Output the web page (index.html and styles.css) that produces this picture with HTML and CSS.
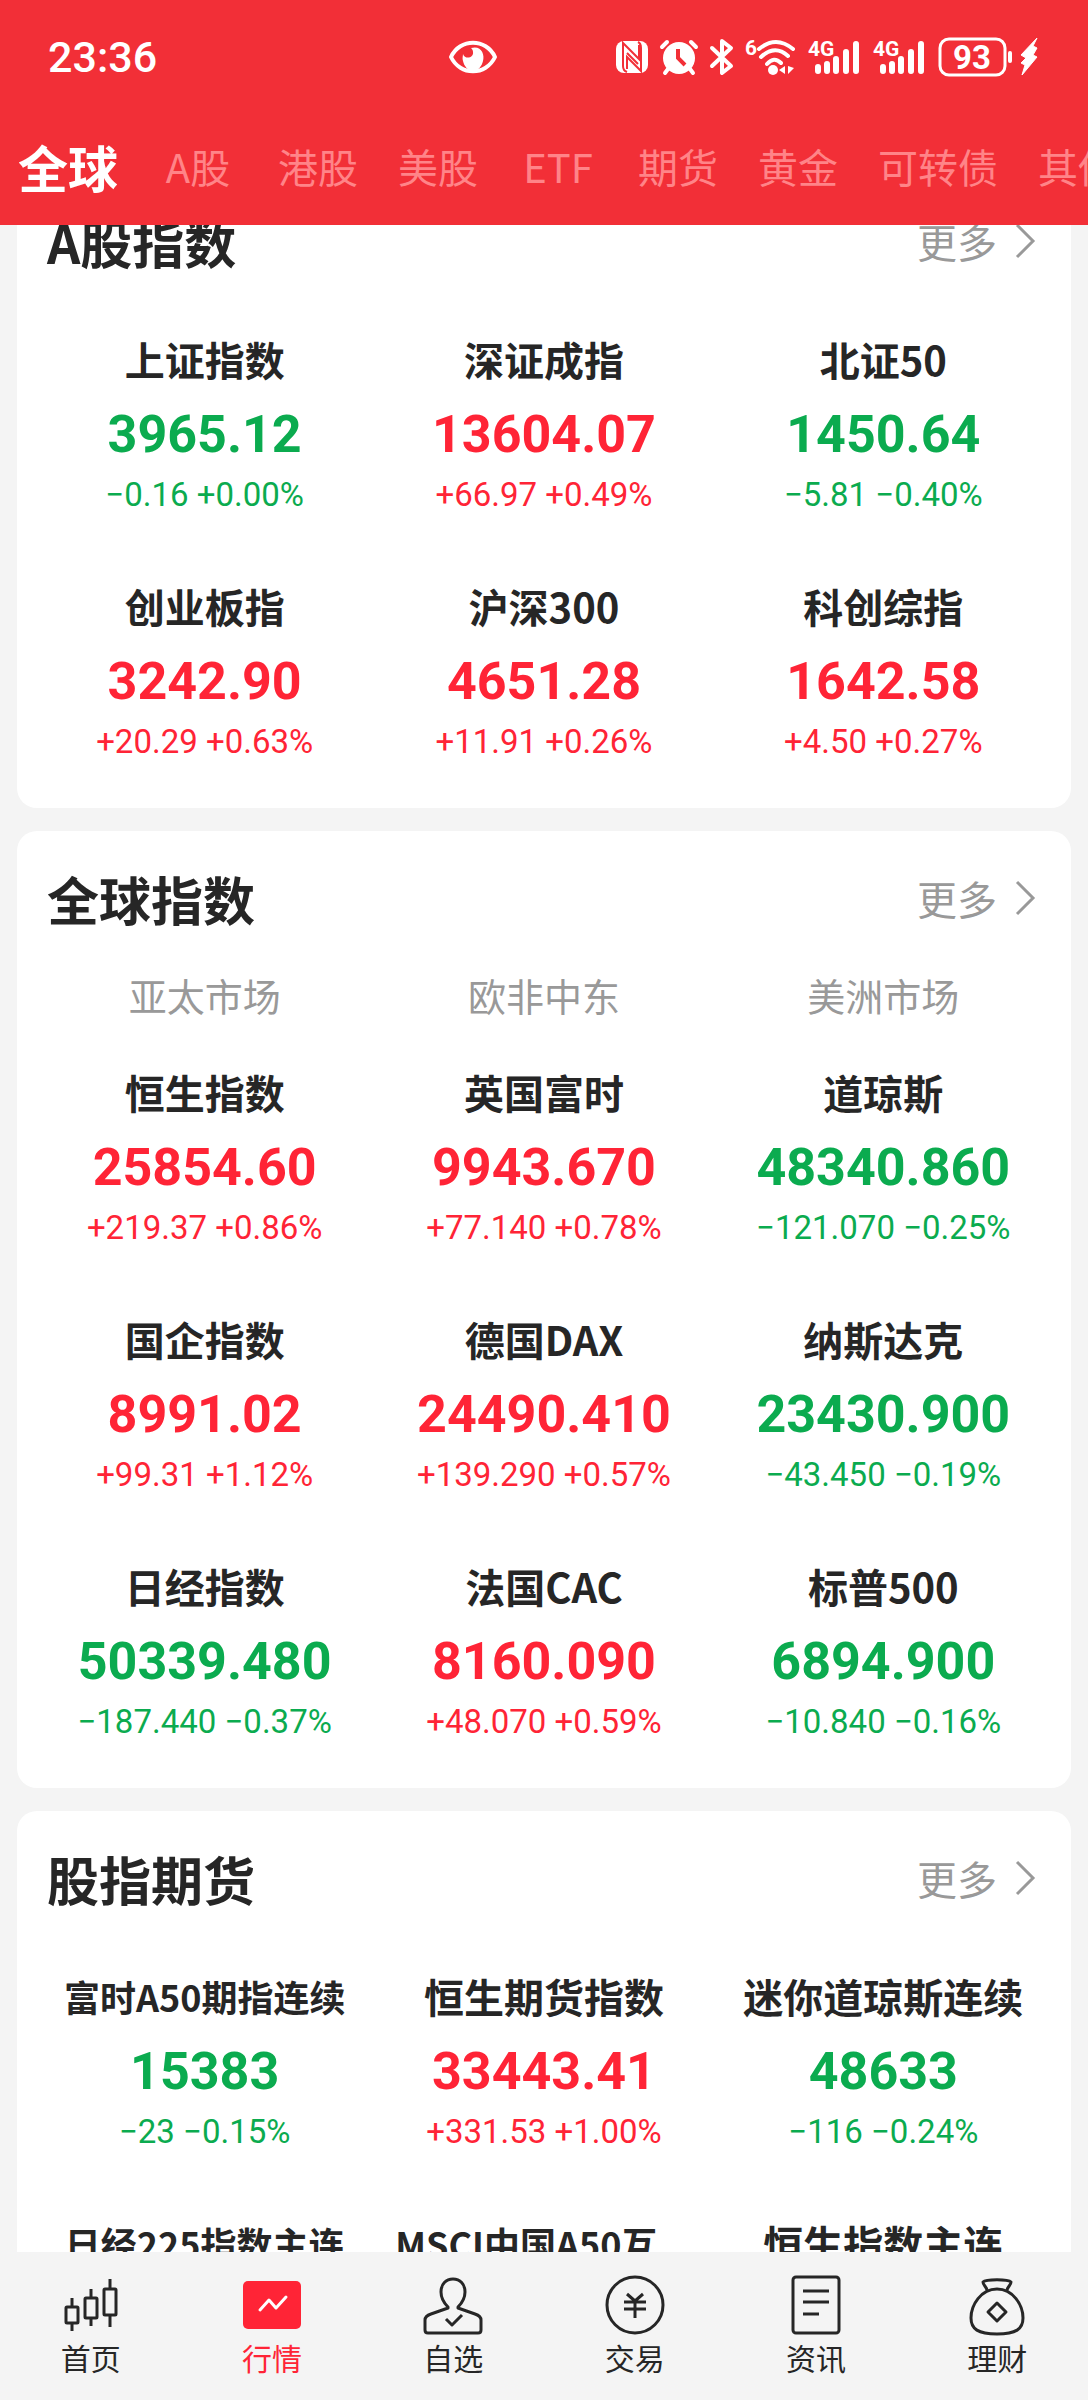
FILE: index.html
```html
<!DOCTYPE html>
<html lang="zh-CN">
<head>
<meta charset="UTF-8">
<meta name="viewport" content="width=device-width, initial-scale=1.0">
<title>行情 - 全球</title>
<link rel="stylesheet" href="styles.css">
</head>
<body>

<header class="top">
  <div class="status-bar">
    <span class="time">23:36</span>
    <svg class="eye" width="50" height="34" viewBox="0 0 50 34" fill="none">
      <path d="M3 17C12 -2 38 -2 47 17C38 36 12 36 3 17Z" stroke="#fff" stroke-width="4" stroke-linejoin="round"/>
      <path d="M23 8C33 5 37 14 35 21C34 26 30 31 25 31C20 31 16 26 15 21C14 18 15 16 15 14C17 20 26 18 25 12C25 10 24 9 23 8Z" fill="#fff"/>
    </svg>
    <div class="status-icons">
      <!-- NFC -->
      <svg width="32" height="34" viewBox="0 0 32 34">
        <rect y="1" width="32" height="32" rx="8" fill="#fff"/>
        <path d="M11 32C8 31 7 29 7 26V3L23 19V5M22 2C24 3 25 5 25 8V31L11 17V29M11 13L22 24" fill="none" stroke="#f22f37" stroke-width="2"/>
      </svg>
      <!-- Alarm -->
      <svg class="alarm" width="38" height="36" viewBox="0 0 38 36">
        <circle cx="19" cy="19" r="16" fill="#fff"/>
        <path d="M2 8L7 3M36 8L31 3M8 30L5 34M30 30L33 34" stroke="#fff" stroke-width="4" stroke-linecap="round"/>
        <path d="M18 10V19L25 26" fill="none" stroke="#f22f37" stroke-width="4"/>
      </svg>
      <!-- Bluetooth -->
      <svg class="bluetooth" width="24" height="36" viewBox="0 0 24 36" fill="none" stroke="#fff" stroke-width="4" stroke-linejoin="round" stroke-linecap="round">
        <path d="M2 9L21 27L12 34V2L21 9L2 27"/>
      </svg>
      <!-- Wi-Fi 6 -->
      <svg class="wifi" width="50" height="36" viewBox="0 0 50 36">
        <text x="-1" y="16" class="svg-tag">6</text>
        <g fill="none" stroke="#fff" stroke-width="4" stroke-linecap="round">
          <path d="M13 10Q30 -4 47 10M15 18Q29 5 42 17M21 25Q28 17 35 24"/>
        </g>
        <circle cx="27" cy="31" r="5" fill="#fff"/>
        <path d="M33 31L39 27V35ZM41 27V35ZM42 27L48 29L42 35Z" fill="#fff"/>
      </svg>
      <!-- Mobile signal, two cards -->
      <svg class="signal" width="53" height="36" viewBox="0 0 53 36">
        <text x="0" y="17" class="svg-tag">4G</text>
        <path d="M10 28V32M19 25V32M28 20V32M38 13V32M48 5V32" stroke="#fff" stroke-width="6" stroke-linecap="round"/>
      </svg>
      <svg class="signal" width="53" height="36" viewBox="0 0 53 36">
        <text x="0" y="17" class="svg-tag">4G</text>
        <path d="M10 28V32M19 25V32M28 20V32M38 13V32M48 5V32" stroke="#fff" stroke-width="6" stroke-linecap="round"/>
      </svg>
      <!-- Battery -->
      <svg width="102" height="40" viewBox="0 0 102 40">
        <rect x="2" y="2" width="65" height="36" rx="9" fill="none" stroke="#fff" stroke-width="3"/>
        <text x="34" y="32" class="svg-battery">93</text>
        <path d="M72 16V24" stroke="#fff" stroke-width="4" stroke-linecap="round"/>
        <path d="M99 1L83 18L88 21L83 26L87 28L84 38L99 20L95 18L99 11L95 9Z" fill="#fff" stroke="#fff" stroke-width="1" stroke-linejoin="round"/>
      </svg>
    </div>
  </div>
  <nav class="tabs">
    <a href="#" class="tab active">全球</a>
    <a href="#" class="tab">A股</a>
    <a href="#" class="tab">港股</a>
    <a href="#" class="tab">美股</a>
    <a href="#" class="tab">ETF</a>
    <a href="#" class="tab">期货</a>
    <a href="#" class="tab">黄金</a>
    <a href="#" class="tab">可转债</a>
    <a href="#" class="tab">其他</a>
  </nav>
</header>

<main class="content">
  <section class="card scrolled">
    <div class="card-head">
      <h2>A股指数</h2>
      <a href="#" class="more">更多
        <svg width="20" height="36" viewBox="0 0 20 36"><path d="M2 2L18 18L2 34"/></svg>
      </a>
    </div>
    <div class="grid">
      <div class="quote down"><h3>上证指数</h3><strong>3965.12</strong><span>−0.16 +0.00%</span></div>
      <div class="quote up"><h3>深证成指</h3><strong>13604.07</strong><span>+66.97 +0.49%</span></div>
      <div class="quote down"><h3>北证50</h3><strong>1450.64</strong><span>−5.81 −0.40%</span></div>
      <div class="quote up"><h3>创业板指</h3><strong>3242.90</strong><span>+20.29 +0.63%</span></div>
      <div class="quote up"><h3>沪深300</h3><strong>4651.28</strong><span>+11.91 +0.26%</span></div>
      <div class="quote up"><h3>科创综指</h3><strong>1642.58</strong><span>+4.50 +0.27%</span></div>
    </div>
  </section>

  <section class="card">
    <div class="card-head">
      <h2>全球指数</h2>
      <a href="#" class="more">更多
        <svg width="20" height="36" viewBox="0 0 20 36"><path d="M2 2L18 18L2 34"/></svg>
      </a>
    </div>
    <div class="markets">
      <span>亚太市场</span>
      <span>欧非中东</span>
      <span>美洲市场</span>
    </div>
    <div class="grid">
      <div class="quote up"><h3>恒生指数</h3><strong>25854.60</strong><span>+219.37 +0.86%</span></div>
      <div class="quote up"><h3>英国富时</h3><strong>9943.670</strong><span>+77.140 +0.78%</span></div>
      <div class="quote down"><h3>道琼斯</h3><strong>48340.860</strong><span>−121.070 −0.25%</span></div>
      <div class="quote up"><h3>国企指数</h3><strong>8991.02</strong><span>+99.31 +1.12%</span></div>
      <div class="quote up"><h3>德国DAX</h3><strong>24490.410</strong><span>+139.290 +0.57%</span></div>
      <div class="quote down"><h3>纳斯达克</h3><strong>23430.900</strong><span>−43.450 −0.19%</span></div>
      <div class="quote down"><h3>日经指数</h3><strong>50339.480</strong><span>−187.440 −0.37%</span></div>
      <div class="quote up"><h3>法国CAC</h3><strong>8160.090</strong><span>+48.070 +0.59%</span></div>
      <div class="quote down"><h3>标普500</h3><strong>6894.900</strong><span>−10.840 −0.16%</span></div>
    </div>
  </section>

  <section class="card">
    <div class="card-head">
      <h2>股指期货</h2>
      <a href="#" class="more">更多
        <svg width="20" height="36" viewBox="0 0 20 36"><path d="M2 2L18 18L2 34"/></svg>
      </a>
    </div>
    <div class="grid">
      <div class="quote down"><h3 class="long">富时A50期指连续</h3><strong>15383</strong><span>−23 −0.15%</span></div>
      <div class="quote up"><h3>恒生期货指数</h3><strong>33443.41</strong><span>+331.53 +1.00%</span></div>
      <div class="quote down"><h3>迷你道琼斯连续</h3><strong>48633</strong><span>−116 −0.24%</span></div>
      <div class="quote"><h3 class="long">日经225指数主连</h3></div>
      <div class="quote"><h3 class="long">MSCI中国A50互...</h3></div>
      <div class="quote"><h3>恒生指数主连</h3></div>
    </div>
  </section>
</main>

<nav class="bottom-nav">
  <a href="#" class="nav-item">
    <svg width="60" height="60" viewBox="0 0 60 60">
      <rect x="5" y="32" width="12" height="16" rx="1"/>
      <rect x="24" y="23" width="12" height="20" rx="1"/>
      <rect x="43" y="14" width="12" height="26" rx="1"/>
      <path d="M11 23V32M11 48V56M30 14V23M30 43V51M49 4V14M49 40V52"/>
    </svg>
    首页
  </a>
  <a href="#" class="nav-item active">
    <svg width="60" height="60" viewBox="0 0 60 60">
      <rect class="fill" x="1" y="6" width="58" height="48" rx="5"/>
      <path class="line" d="M18 35L27 25L34 33L44 22"/>
    </svg>
    行情
  </a>
  <a href="#" class="nav-item">
    <svg width="60" height="60" viewBox="0 0 60 60">
      <path d="M25 32C21 28 18 22 18 17C18 9 23 4 30 4S42 9 42 17C42 22 39 28 35 32V33L52 39Q58 41 58 45V55Q58 58 55 58H5Q2 58 2 55V45Q2 41 8 39L25 33Z"/>
      <path d="M23 44L29 50L39 40"/>
    </svg>
    自选
  </a>
  <a href="#" class="nav-item">
    <svg width="60" height="60" viewBox="0 0 60 60">
      <circle cx="30" cy="30" r="28"/>
      <path d="M22 19L30 26L38 19M19 27H41M19 34H41M30 26V43"/>
    </svg>
    交易
  </a>
  <a href="#" class="nav-item">
    <svg width="60" height="60" viewBox="0 0 60 60">
      <rect x="7" y="2" width="46" height="56" rx="3"/>
      <path d="M17 16H43M17 27H43M17 39H33"/>
    </svg>
    资讯
  </a>
  <a href="#" class="nav-item">
    <svg width="60" height="60" viewBox="0 0 60 60">
      <path d="M20 15C19 11 16 10 16 7C19 4 41 4 44 7C44 10 41 11 40 15"/>
      <path d="M30 14C14 14 4 30 4 43C4 54 11 59 30 59S56 54 56 43C56 30 46 14 30 14Z"/>
      <path d="M30 28L39 37L30 46L21 37Z"/>
    </svg>
    理财
  </a>
</nav>

</body>
</html>
```
FILE: styles.css
```css
* {
  box-sizing: border-box;
}

body {
  display: flex;
  flex-direction: column;
  height: 100vh;
  margin: 0;
  overflow: hidden;
  background-color: #f4f4f4;
  font-family: 'Noto Sans CJK SC', sans-serif;
  color: #262626;
}

a {
  color: inherit;
  text-decoration: none;
}

svg {
  display: block;
  flex: none;
  overflow: visible;
}

h2,
h3 {
  margin: 0;
}

/* Header */
.top {
  flex: none;
  background-color: #f22f37;
  color: #fff;
}

.status-bar {
  display: grid;
  grid-template-columns: 1fr auto auto;
  align-items: center;
  height: 114px;
  padding: 0 48px;
}

.time {
  font-family: Roboto, sans-serif;
  font-size: 43px;
  font-weight: 500;
}

.eye {
  margin-right: 118px;
}

.status-icons {
  display: flex;
  align-items: center;
  gap: 12px;
}

.svg-tag {
  font: 700 21px Roboto, sans-serif;
  fill: #fff;
}

.svg-battery {
  font: 700 33px Roboto, sans-serif;
  text-anchor: middle;
  fill: #fff;
}

/* Category tabs */
.tabs {
  display: flex;
  align-items: center;
  gap: 40px;
  height: 111px;
  padding: 0 0 8px 18px;
  overflow: hidden;
  white-space: nowrap;
}

.tab {
  flex: none;
  min-width: 80px;
  font-size: 40px;
  text-align: center;
  color: #ff8488;
}

.tab.active {
  font-size: 50px;
  font-weight: 700;
  color: #fff;
}

/* Cards */
.content {
  flex: 1;
  min-height: 0;
  padding: 0 17px;
  overflow: hidden;
}

.card {
  margin-bottom: 23px;
  padding: 0 18px 52px;
  border-radius: 20px;
  background-color: #fff;
}

/* first card is partly scrolled under the header */
.card.scrolled {
  margin-top: -51px;
}

.card-head {
  display: flex;
  align-items: center;
  justify-content: space-between;
  height: 134px;
  padding: 0 18px 0 12px;
}

.card-head h2 {
  font-size: 52px;
  font-weight: 700;
}

.more {
  display: flex;
  align-items: center;
  gap: 18px;
  font-size: 40px;
  color: #999;
}

.more path {
  fill: none;
  stroke: #999;
  stroke-width: 3;
}

.markets,
.grid {
  display: grid;
  grid-template-columns: repeat(3, 1fr);
  text-align: center;
}

.markets {
  margin-bottom: 17px;
  font-size: 38px;
  line-height: 60px;
  color: #999;
}

.grid {
  row-gap: 67px;
  padding-top: 21px;
}

.markets + .grid {
  padding-top: 20px;
}

.quote {
  display: flex;
  flex-direction: column;
  white-space: nowrap;
}

.quote h3 {
  font-size: 40px;
  font-weight: 700;
  line-height: 60px;
}

.quote h3.long {
  font-size: 36px;
}

.quote strong {
  font-family: Roboto, sans-serif;
  font-size: 52px;
  font-weight: 700;
  line-height: 92px;
}

.quote span {
  font-family: Roboto, sans-serif;
  font-size: 33px;
  line-height: 28px;
}

.up strong,
.up span {
  color: #ff2436;
}

.down strong,
.down span {
  color: #0bab4f;
}

/* Bottom navigation */
.bottom-nav {
  display: grid;
  grid-template-columns: repeat(6, 1fr);
  flex: none;
  height: 148px;
  padding-top: 23px;
  background-color: #f4f4f4;
}

.nav-item {
  display: flex;
  flex-direction: column;
  align-items: center;
  gap: 2px;
  font-size: 30px;
  line-height: 40px;
}

.nav-item svg {
  fill: none;
  stroke: #262626;
  stroke-width: 3;
  stroke-linejoin: round;
}

.nav-item.active {
  color: #ff2436;
}

.nav-item .fill {
  fill: #ff2436;
  stroke: none;
}

.nav-item .line {
  stroke: #fff;
  stroke-linecap: round;
}
```
